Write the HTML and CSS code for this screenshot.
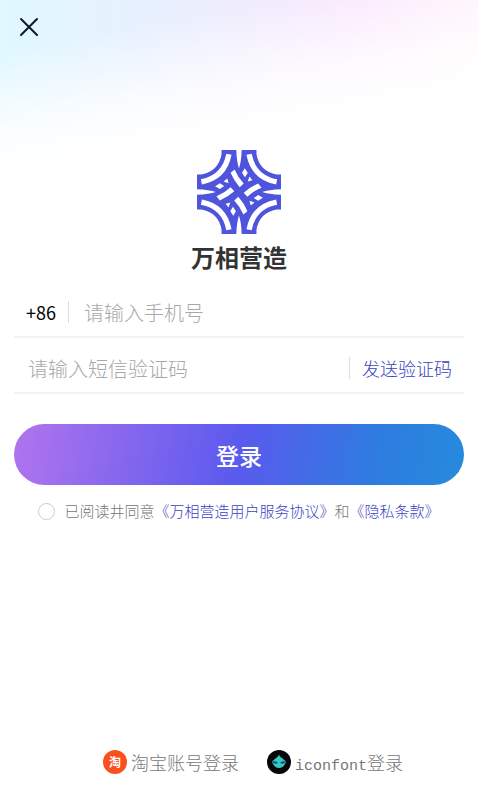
FILE: index.html
```html
<!DOCTYPE html>
<html lang="zh-CN">
<head>
    <meta charset="UTF-8">
    <meta name="viewport" content="width=device-width, initial-scale=1">
    <title>万相营造</title>
    <link rel="stylesheet" href="styles.css">
</head>
<body>

<div class="page">

    <header class="topbar">
        <button class="close" type="button" aria-label="关闭">
            <svg viewBox="0 0 20 20" width="20" height="20">
                <path d="M2 2L18 18M18 2L2 18" fill="none" stroke="#0b1a2b" stroke-width="2" stroke-linecap="round"/>
            </svg>
        </button>
    </header>

    <!-- LOGO -->
    <div class="brand">
        <svg class="logo" viewBox="0 0 250 250" aria-hidden="true">
            <defs>
                <g id="petal">
                    <path d="M73 0H117Q118 36 126 58V126H58Q36 118 0 117V73H13Q64 64 73 13Z" fill="#4e54dc"/>
                    <path d="M95 13Q82 82 13 95" fill="none" stroke="#fff" stroke-width="16"/>
                </g>
                <g id="weave" fill="#fff">
                    <path d="M100 68L112 58Q122 82 139 100L127 111Q110 92 100 68Z"/>
                    <path d="M142 54L151 68L143 81L134 68Z"/>
                    <path d="M90 85L94 99L79 94Z"/>
                </g>
            </defs>
            <use href="#petal"/>
            <use href="#petal" transform="rotate(90 125 125)"/>
            <use href="#petal" transform="rotate(180 125 125)"/>
            <use href="#petal" transform="rotate(270 125 125)"/>
            <use href="#weave"/>
            <use href="#weave" transform="rotate(90 125 125)"/>
            <use href="#weave" transform="rotate(180 125 125)"/>
            <use href="#weave" transform="rotate(270 125 125)"/>
        </svg>
        <h1 class="brand-name">万相营造</h1>
    </div>

    <!-- LOGIN -->
    <form class="login">
        <div class="field">
            <label class="prefix" for="phone">+86</label>
            <input class="phone" id="phone" type="tel" placeholder="请输入手机号">
        </div>
        <div class="field">
            <input id="code" type="text" placeholder="请输入短信验证码" aria-label="短信验证码">
            <button class="send" type="button">发送验证码</button>
        </div>
        <button class="submit" type="submit">登录</button>
        <div class="agree">
            <input id="agree" type="checkbox">
            <label for="agree">已阅读井同意<a href="#">《万相营造用户服务协议》</a>和<a href="#">《隐私条款》</a></label>
        </div>
    </form>

    <!-- OTHER LOGINS -->
    <footer class="others">
        <a class="other" href="#">
            <span class="taobao">淘</span>
            <span>淘宝账号登录</span>
        </a>
        <a class="other" href="#">
            <svg viewBox="0 0 24 24" width="24" height="24" aria-hidden="true">
                <circle cx="12" cy="12" r="12" fill="#050708"/>
                <path d="M12 4C12 7 16 8 17 10Q20 11 18 14Q16 18 12 18T6 14Q4 11 7 10C8 8 12 7 12 4Z" fill="#35c9c6"/>
                <path d="M5 12Q9 10 11 13Q8 15 5 12ZM19 12Q15 10 13 13Q16 15 19 12Z" fill="#17506a"/>
            </svg>
            <span><span class="mono">iconfont</span>登录</span>
        </a>
    </footer>

</div>

</body>
</html>
```
FILE: styles.css
```css
* {
    box-sizing: border-box;
}

body {
    margin: 0;
    background: #fff;
    color: #777;
    font-family: "Noto Sans CJK SC", sans-serif;
    font-weight: 300;
}

.page {
    display: flex;
    flex-direction: column;
    min-height: 100vh;
    padding: 17px 14px 35px;
    background:
        linear-gradient(170deg, rgba(255, 255, 255, 0) 50px, rgba(255, 255, 255, 0.8) 125px, #fff 170px) no-repeat,
        linear-gradient(90deg, #e0f8ff 0%, #e8f1ff 30%, #efedfd 50%, #fae8fe 75%, #fff0fb 100%);
}

button, input {
    font: inherit;
    border: none;
    padding: 0;
    background: none;
}

button {
    cursor: pointer;
}

a {
    color: #3c41c4;
    text-decoration: none;
}

.topbar {
    display: flex;
    padding-left: 5px;
}

.close {
    display: flex;
}

.brand {
    display: flex;
    flex-direction: column;
    align-items: center;
    margin-top: 113px;
}

.logo {
    width: 84px;
    height: 84px;
}

.brand-name {
    margin: 5px 0 0;
    color: #333;
    font-size: 24px;
    font-weight: 700;
    line-height: 36px;
}

.login {
    display: flex;
    flex-direction: column;
    margin-top: 7px;
}

.field {
    display: flex;
    align-items: center;
    height: 56px;
    padding: 6px 12px 0;
    border-bottom: 2px solid #f1f1f8;
}

.field input {
    flex: 1;
    min-width: 0;
    padding-left: 2px;
    font-size: 20px;
    outline: none;
}

.field .phone {
    padding-left: 15px;
}

.field input::placeholder {
    color: #a8a8a8;
    opacity: 1;
}

.prefix {
    padding-right: 12px;
    border-right: 1px solid #ddd;
    color: #000;
    font-size: 18px;
    font-weight: 400;
    line-height: 22px;
}

.send {
    padding-left: 12px;
    border-left: 1px solid #ddd;
    color: #3c41c4;
    font-size: 18px;
    line-height: 22px;
}

.submit {
    height: 61px;
    margin-top: 30px;
    border-radius: 31px;
    background: linear-gradient(100deg, #b174ee 0%, #5a5aee 50%, #2e7ce0 80%, #268bdc 100%);
    color: #fff;
    font-size: 23px;
    font-weight: 500;
}

.agree {
    display: flex;
    align-items: center;
    justify-content: center;
    gap: 9px;
    margin-top: 14px;
    font-size: 15px;
    line-height: 24px;
}

.agree input {
    appearance: none;
    width: 17px;
    height: 17px;
    margin: 0;
    border: 1px solid #ccc;
    border-radius: 50%;
}

.others {
    display: flex;
    justify-content: center;
    gap: 28px;
    margin-top: auto;
    padding-left: 28px;
}

.other {
    display: flex;
    align-items: center;
    gap: 4px;
    color: #777;
    font-size: 18px;
    line-height: 28px;
}

.taobao {
    width: 24px;
    height: 24px;
    border-radius: 50%;
    background: #f9501e;
    color: #fff;
    font-size: 12px;
    font-weight: 700;
    line-height: 24px;
    text-align: center;
}

.mono {
    font-family: "Liberation Mono", monospace;
    font-size: 15px;
    line-height: 1;
}
```
